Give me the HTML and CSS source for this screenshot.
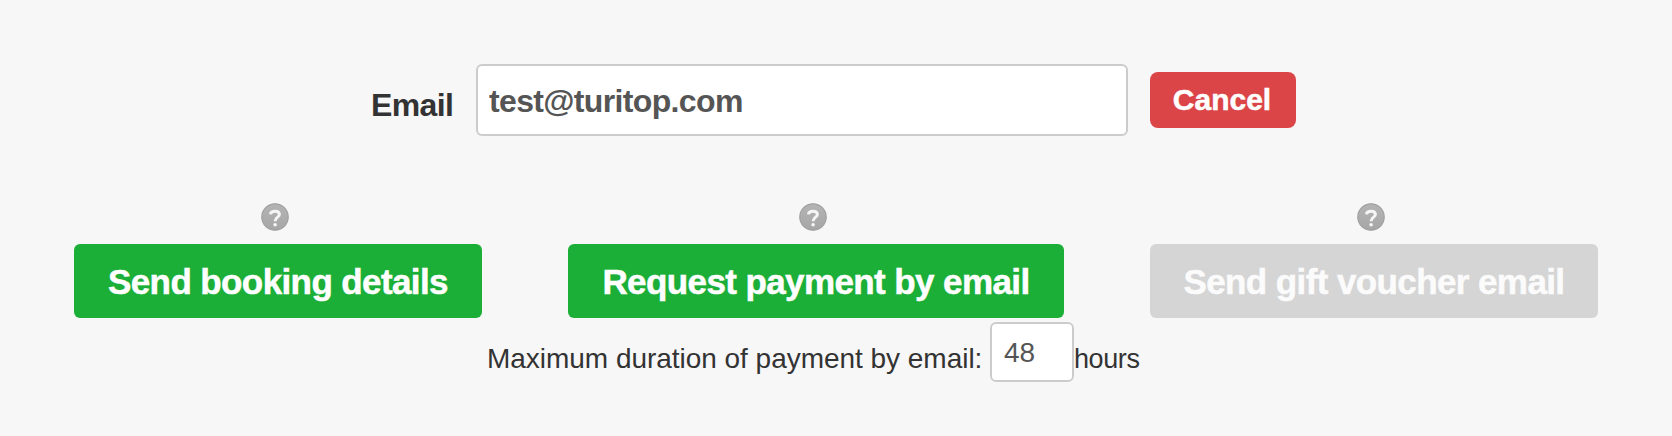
FILE: index.html
```html
<!DOCTYPE html>
<html>
<head>
    <meta charset="utf-8">
    <title>Send email</title>
    <link rel="stylesheet" href="styles.css">
</head>
<body>
    <svg class="sprite" width="0" height="0">
        <defs>
            <linearGradient id="help-bg" x1="0" y1="0" x2="0" y2="1">
                <stop offset="0" stop-color="#b4b4b4"/>
                <stop offset="1" stop-color="#a6a6a6"/>
            </linearGradient>
        </defs>
        <symbol id="help" viewBox="0 0 28 28">
            <circle cx="14" cy="14" r="13.2" fill="url(#help-bg)" stroke="#a0a0a0" stroke-width="1.2"/>
            <path d="M9.5 11.4C9.6 9.2 11.3 8.2 14 8.2C16.8 8.2 18.4 9.4 18.4 11.4C18.4 14.2 14.1 14.2 14.1 18.2" fill="none" stroke="#f5f5f5" stroke-width="3"/>
            <circle cx="14.1" cy="21.7" r="1.8" fill="#f5f5f5"/>
        </symbol>
    </svg>

    <div class="email-row">
        <label class="email-label" for="email">Email</label>
        <input class="email-input" type="text" id="email" value="test@turitop.com">
        <button class="button cancel">Cancel</button>
    </div>

    <div class="actions">
        <div class="action">
            <svg class="help"><use href="#help"/></svg>
            <button class="button send booking">Send booking details</button>
        </div>
        <div class="action">
            <svg class="help"><use href="#help"/></svg>
            <button class="button send payment">Request payment by email</button>
        </div>
        <div class="action">
            <svg class="help"><use href="#help"/></svg>
            <button class="button send voucher" disabled>Send gift voucher email</button>
        </div>
    </div>

    <div class="duration">
        <label class="duration-label" for="hours">Maximum duration of payment by email:</label>
        <input class="hours-input" type="text" id="hours" value="48">
        <span class="hours-label">hours</span>
    </div>
</body>
</html>
```
FILE: styles.css
```css
* {
    box-sizing: border-box;
}
body {
    margin: 0;
    padding-top: 64px;
    height: 436px;
    overflow: hidden;
    background-color: #f7f7f7;
    color: #333;
    font-family: "Liberation Sans", Arial, sans-serif;
}
.sprite {
    display: block;
}
.email-row {
    display: flex;
    align-items: flex-start;
    height: 72px;
    padding-left: 371px;
}
.email-label {
    width: 105px;
    padding-top: 23px;
    font-size: 32px;
    font-weight: bold;
    line-height: 36px;
    letter-spacing: -0.6px;
}
.email-input {
    width: 652px;
    height: 72px;
    margin-right: 22px;
    padding: 2px 12px 0 11px;
    border: 2px solid #ccc;
    border-radius: 6px;
    background-color: #fff;
    color: #555;
    font-family: inherit;
    font-size: 32px;
    font-weight: bold;
    letter-spacing: -0.65px;
}
.button {
    padding: 0;
    border: none;
    color: #fff;
    font-family: inherit;
    font-weight: bold;
    white-space: nowrap;
    -webkit-text-stroke: 0.5px;
}
.cancel {
    width: 146px;
    height: 56px;
    margin-top: 8px;
    padding-right: 2px;
    border-radius: 8px;
    background-color: #dc4547;
    font-size: 30px;
}
.actions {
    display: flex;
    gap: 86px;
    padding: 67px 74px 0;
}
.action {
    display: flex;
    flex-direction: column;
    align-items: center;
}
.help {
    width: 28px;
    height: 28px;
    margin: 0 6px 13px 0;
}
.send {
    height: 74px;
    padding-top: 1px;
    border-radius: 6px;
    background-color: #1caf38;
    font-size: 35px;
    letter-spacing: -0.6px;
}
.booking {
    width: 408px;
}
.payment {
    width: 496px;
}
.voucher {
    width: 448px;
    background-color: #d5d5d5;
    color: #fbfbfb;
}
.duration {
    display: flex;
    align-items: flex-start;
    padding: 4px 0 0 487px;
    font-size: 28px;
    line-height: 32px;
}
.duration-label {
    width: 503px;
    padding-top: 21px;
    white-space: nowrap;
    letter-spacing: -0.03px;
}
.hours-input {
    width: 84px;
    height: 60px;
    padding: 1px 12px 0;
    border: 2px solid #ccc;
    border-radius: 6px;
    background-color: #fff;
    color: #555;
    font-family: inherit;
    font-size: 28px;
}
.hours-label {
    padding-top: 21px;
    font-size: 27px;
    letter-spacing: -0.4px;
}
```
